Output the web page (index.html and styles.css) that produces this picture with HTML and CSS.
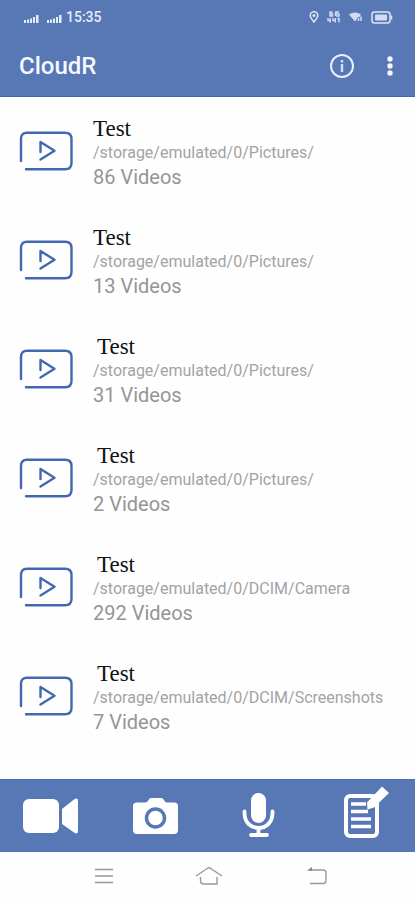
FILE: index.html
```html
<!DOCTYPE html>
<html lang="en">
<head>
<meta charset="utf-8">
<meta name="viewport" content="width=device-width, initial-scale=1">
<title>CloudR</title>
<link rel="stylesheet" href="styles.css">
</head>
<body>
<svg class="sprite" aria-hidden="true">
  <symbol id="video-folder" viewBox="0 0 54 40">
    <g fill="none" stroke="#4468b0" stroke-width="2.400" stroke-linecap="round">
      <path d="M2 30V8Q2 1.800 8 1.800H46Q52.500 1.800 52.500 8V32Q52.500 38.200 46 38.200H7"/>
      <path d="M21.500 21V11L35.500 19.800L21.500 28.500" stroke-linejoin="round"/>
    </g>
  </symbol>
  <symbol id="signal" viewBox="0 0 15 8">
    <path d="M0 5h2v3H0zM3 4.500h2V8H3zM6 3.500h2V8H6zM9 2h2v6H9zM12 0h2.500v8H12z" fill="#e4edfb"/>
  </symbol>
</svg>
<div class="app">
  <header class="top">
    <div class="status">
      <div class="status-left">
        <svg class="bars" width="15" height="8"><use href="#signal"/></svg>
        <svg class="bars" width="15" height="8"><use href="#signal"/></svg>
        <span class="clock">15:35</span>
      </div>
      <div class="status-right">
        <svg width="10" height="12" viewBox="0 0 10 12"><path d="M5 11C3 8.500 1.200 6.500 1.200 4.500a3.800 3.800 0 0 1 7.600 0C8.800 6.500 7 8.500 5 11z" fill="none" stroke="#dbe6f8" stroke-width="1.500"/><circle cx="5" cy="4.500" r="1.500" fill="#dbe6f8"/></svg>
        <svg width="14" height="12" viewBox="0 0 14 12" fill="none" stroke="#cfdcf3" stroke-width="1.400"><path d="M5.500 1H3v4h2.500V3H3M8.500 1v4M12 1H9v2h3v2H9M1 7v2.500h3M3.300 7v4.500M6 7v2.500h3M8.300 7v4.500M12 7v4.500M10.500 8.500L12 7"/></svg>
        <svg width="14" height="10" viewBox="0 0 14 10"><path d="M0 2.500Q6 -1.500 12 2.500L10.500 5H9L6 9.500z" fill="#cfdcf3"/><path d="M9.500 9V6M12 9V4.500" stroke="#cfdcf3" stroke-width="1.500"/></svg>
        <svg width="22" height="13" viewBox="0 0 22 13"><rect x="1" y="1" width="18" height="11" rx="2.500" fill="none" stroke="#dbe6f8" stroke-width="1.500"/><rect x="4" y="3.500" width="12" height="6" rx="1" fill="#cfdcf3"/><path d="M20.500 4.500v4" stroke="#dbe6f8" stroke-width="1.500"/></svg>
      </div>
    </div>
    <div class="bar">
      <h1>CloudR</h1>
      <div class="actions">
        <button type="button" aria-label="Information"><svg width="26" height="26" viewBox="0 0 26 26"><circle cx="13" cy="13" r="11" fill="none" stroke="#e8f0fd" stroke-width="2"/><path d="M13 11v8M13 7v2.500" stroke="#d5e1f6" stroke-width="2.400"/></svg></button>
        <button type="button" aria-label="More options"><svg width="6" height="22" viewBox="0 0 6 22" fill="#f4f8ff"><circle cx="3" cy="4" r="2.700"/><circle cx="3" cy="11" r="2.700"/><circle cx="3" cy="18" r="2.700"/></svg></button>
      </div>
    </div>
  </header>
  <main>
    <ul class="folders">
      <li><svg class="thumb"><use href="#video-folder"/></svg><div class="info"><h2>Test</h2><p class="path">/storage/emulated/0/Pictures/</p><p class="count">86 Videos</p></div></li>
      <li><svg class="thumb"><use href="#video-folder"/></svg><div class="info"><h2>Test</h2><p class="path">/storage/emulated/0/Pictures/</p><p class="count">13 Videos</p></div></li>
      <li><svg class="thumb"><use href="#video-folder"/></svg><div class="info"><h2>Test</h2><p class="path">/storage/emulated/0/Pictures/</p><p class="count">31 Videos</p></div></li>
      <li><svg class="thumb"><use href="#video-folder"/></svg><div class="info"><h2>Test</h2><p class="path">/storage/emulated/0/Pictures/</p><p class="count">2 Videos</p></div></li>
      <li><svg class="thumb"><use href="#video-folder"/></svg><div class="info"><h2>Test</h2><p class="path">/storage/emulated/0/DCIM/Camera</p><p class="count">292 Videos</p></div></li>
      <li><svg class="thumb"><use href="#video-folder"/></svg><div class="info"><h2>Test</h2><p class="path">/storage/emulated/0/DCIM/Screenshots</p><p class="count">7 Videos</p></div></li>
    </ul>
  </main>
  <nav class="tools" aria-label="Capture">
    <button type="button" aria-label="Video"><svg width="60" height="56" viewBox="0 0 60 56" fill="#fff"><rect x="1" y="11" width="36" height="34" rx="6"/><path d="M40 21L52 11.500Q56 9 56 13V43Q56 47 52 44.500L40 36z"/></svg></button>
    <button type="button" aria-label="Photo"><svg width="46" height="56" viewBox="0 0 46 56"><path d="M4 14.500H12Q14.500 14.500 15.500 12Q16.500 10 18 10H28Q30 10 31 12Q32 14.500 34 14.500H41Q45 14.500 45 18V42Q45 46 41 46H4Q0 46 0 42V18Q0 14.500 4 14.500z" fill="#fff"/><circle cx="22.500" cy="30" r="9" fill="none" stroke="#5877b5" stroke-width="3.500"/></svg></button>
    <button type="button" aria-label="Audio"><svg width="34" height="56" viewBox="0 0 34 56"><rect x="9" y="5" width="15" height="30" rx="7.500" fill="#fff"/><path d="M2.500 23.500V25C2.500 45 30.500 45 30.500 25V23.500M16.500 40V47M9 47H25" fill="none" stroke="#fff" stroke-width="3.800" stroke-linecap="round"/></svg></button>
    <button type="button" aria-label="Note"><svg width="52" height="60" viewBox="0 0 52 60"><g transform="translate(3 0)"><rect x="6" y="10" width="31" height="40" rx="4" fill="none" stroke="#fff" stroke-width="4"/><path d="M11 18H26M11 25.500H28M11 33H31M11 40.500H31" stroke="#fff" stroke-width="3.600"/><path d="M27 16.500L42 .5L49 7L34 21.500L27.500 23.500z" fill="#fff"/></g></svg></button>
  </nav>
  <nav class="system" aria-label="System">
    <button type="button" aria-label="Recent apps"><svg width="20" height="20" viewBox="0 0 20 20"><path d="M1 3.500H19M1 10H19M1 16.500H19" stroke="#999" stroke-width="1.500"/></svg></button>
    <button type="button" aria-label="Home"><svg width="32" height="20" viewBox="0 0 32 20"><path d="M1 10L13 2Q14 1.500 15 2L27 10M5.500 11V14.500Q5.500 18 9 18H17V11" fill="none" stroke="none"/><path d="M1 10L13 2Q14 1.500 15 2L27 10M5.500 11V14.500Q5.500 18 9 18H22V11" fill="none" stroke="#999" stroke-width="1.400"/></svg></button>
    <button type="button" aria-label="Back"><svg width="20" height="20" viewBox="0 0 20 20"><path d="M2 4H16Q19 4 19 7V14Q19 17.500 16 17.500H3" fill="none" stroke="#999" stroke-width="1.400"/><path d="M0 4.500L5 1V5z" fill="#888"/></svg></button>
  </nav>
</div>
</body>
</html>
```
FILE: styles.css
```css
* { box-sizing: border-box; }
body { margin: 0; background: #fefefe; font-family: Roboto, sans-serif; }
h1, h2, p, ul { margin: 0; padding: 0; }
button { display: flex; padding: 0; border: 0; background: none; }
svg { display: block; flex: none; }
.sprite { position: absolute; width: 0; height: 0; }
.app { display: flex; flex-direction: column; min-height: 100vh; }

.top { background: #5877b5; border-bottom: 1px solid #4466ab; padding-bottom: 2px; }
.status { display: flex; justify-content: space-between; align-items: center; height: 34px; padding: 0 22px 0 24px; }
.status-left { display: flex; align-items: center; gap: 8px; }
.bars { margin-top: 4px; }
.clock { margin-left: -4px; color: #e4edfb; font-size: 14px; font-weight: 500; line-height: 20px; }
.status-right { display: flex; align-items: center; gap: 8px; }
.bar { display: flex; justify-content: space-between; align-items: center; height: 60px; padding: 4px 22px 0 19px; }
h1 { color: #f4f8ff; font-size: 24px; font-weight: 500; line-height: 32px; }
.actions { display: flex; align-items: center; gap: 32px; }

main { flex: 1; display: flex; padding-bottom: 29px; }
.folders { flex: 1; display: grid; grid-auto-rows: 1fr; list-style: none; }
.folders li { display: flex; align-items: center; gap: 20px; padding: 0 19px; }
.thumb { width: 54px; height: 40px; }
.info { min-width: 0; padding-top: 4px; line-height: 24px; }
h2 { color: #111; font-family: "Liberation Serif", serif; font-size: 23px; font-weight: 400; line-height: 24px; }
.folders li:nth-child(n+3) h2 { padding-left: 4px; }
.path { color: #a3a3a3; font-size: 16px; }
.count { color: #959595; font-size: 20px; }

.tools { display: grid; grid-template-columns: repeat(4, 1fr); align-items: center; justify-items: center; height: 73px; background: #5877b5; border-top: 1px solid #4b6cae; }
.system { display: flex; justify-content: space-between; align-items: center; height: 48px; padding: 0 88px 0 94px; }
```
